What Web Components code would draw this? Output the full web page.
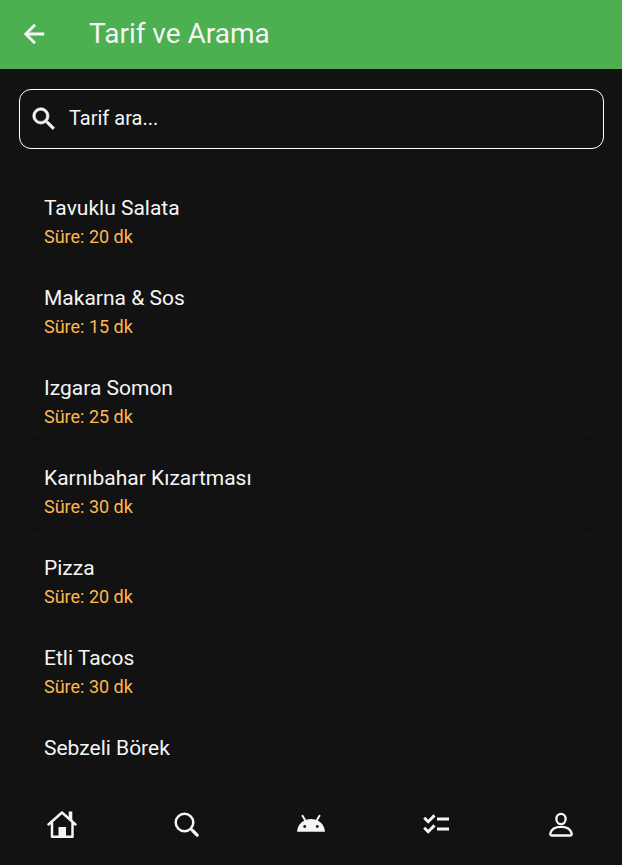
<!DOCTYPE html>
<html lang="tr">
<head>
<meta charset="utf-8">
<meta name="viewport" content="width=device-width, initial-scale=1">
<title>Tarif ve Arama</title>
<style>
  body { margin: 0; background: #121212; color: #f5f5f5; font-family: Roboto, "Liberation Sans", sans-serif; }
</style>
</head>
<body>
<recipe-app>
  <app-header slot="header">Tarif ve Arama</app-header>
  <search-field slot="search" placeholder="Tarif ara..."></search-field>
  <recipe-card minutes="20">Tavuklu Salata</recipe-card>
  <recipe-card minutes="15">Makarna &amp; Sos</recipe-card>
  <recipe-card minutes="25">Izgara Somon</recipe-card>
  <recipe-card minutes="30">Karnıbahar Kızartması</recipe-card>
  <recipe-card minutes="20">Pizza</recipe-card>
  <recipe-card minutes="30">Etli Tacos</recipe-card>
  <recipe-card>Sebzeli Börek</recipe-card>
  <bottom-nav slot="nav"></bottom-nav>
</recipe-app>
<script>
  const define = (name, html, setup) => {
    const template = document.createElement('template');
    template.innerHTML = html;
    customElements.define(name, class extends HTMLElement {
      constructor() {
        super();
        this.attachShadow({ mode: 'open' }).append(template.content.cloneNode(true));
      }
      connectedCallback() { if (setup) setup(this, this.shadowRoot); }
    });
  };

  define('recipe-app', `
    <style>
      :host { display: flex; flex-direction: column; height: 100vh; }
      .search { padding: 20px 18px 10px 19px; }
      .list { flex: 1; min-height: 0; overflow: hidden; padding: 20px 24px 0; }
    </style>
    <slot name="header"></slot>
    <div class="search"><slot name="search"></slot></div>
    <main class="list"><slot></slot></main>
    <slot name="nav"></slot>`);

  define('app-header', `
    <style>
      :host { display: flex; align-items: center; gap: 40px; box-sizing: border-box; height: 69px; padding: 0 19px 2px; background: #4caf50; }
      button { display: flex; padding: 0; border: 0; background: none; color: inherit; }
      h1 { margin: 0; font-size: 28px; line-height: 36px; font-weight: 400; }
    </style>
    <button type="button" aria-label="Geri">
      <svg width="30" height="30" viewBox="0 0 24 24" fill="currentColor" stroke="currentColor" stroke-width=".4" aria-hidden="true"><path d="M20 11H7.83l5.59-5.59L12 4l-8 8 8 8 1.41-1.41L7.83 13H20v-2z"/></svg>
    </button>
    <h1><slot></slot></h1>`);

  define('search-field', `
    <style>
      :host { display: block; }
      label { display: flex; align-items: center; gap: 10px; height: 58px; padding: 0 9px; border: 1px solid #fff; border-radius: 12px; }
      svg { flex: none; }
      input { flex: 1; min-width: 0; padding: 0 0 2px; border: 0; outline: 0; background: none; color: inherit; font: 20px/28px Roboto, "Liberation Sans", sans-serif; }
      input::placeholder { color: #f5f5f5; opacity: 1; }
    </style>
    <label>
      <svg width="30" height="30" viewBox="0 0 24 24" fill="currentColor" stroke="currentColor" stroke-width=".5" aria-hidden="true"><path d="M15.5 14h-.79l-.28-.27A6.47 6.47 0 0 0 16 9.500 6.500 6.500 0 1 0 9.500 16c1.610 0 3.090-.590 4.230-1.570l.270.280v.790l5 4.990L20.490 19l-4.990-5zm-6 0C7.010 14 5 11.990 5 9.500S7.010 5 9.500 5 14 7.010 14 9.500 11.990 14 9.500 14z"/></svg>
      <input type="text">
    </label>`, (el, root) => {
      const input = root.querySelector('input');
      input.placeholder = el.getAttribute('placeholder');
      input.setAttribute('aria-label', 'Tarif ara');
    });

  define('recipe-card', `
    <style>
      :host { display: block; box-sizing: border-box; height: 80px; margin-bottom: 10px; padding: 15px 20px; border-radius: 15px; background: #121212; box-shadow: 0 1px 1px #0f0f0f; }
      h2, p { margin: 0; font-weight: 400; }
      h2 { font-size: 21px; line-height: 28px; }
      p { font-size: 18px; line-height: 30px; color: #ffb74d; }
    </style>
    <h2><slot></slot></h2>
    <p></p>`, (el, root) => {
      const minutes = el.getAttribute('minutes');
      if (minutes) root.querySelector('p').textContent = 'Süre: ' + minutes + ' dk';
    });

  define('bottom-nav', `
    <style>
      :host { display: block; background: #121212; }
      nav { display: grid; grid-template-columns: repeat(5, 1fr); height: 100px; padding-top: 20px; box-sizing: border-box; }
      button { display: flex; align-items: center; justify-content: center; border: 0; padding: 0; background: none; color: inherit; }
    </style>
    <nav aria-label="Ana menü">
      <button type="button" aria-label="Ana sayfa">
        <svg width="30" height="30" viewBox="0 0 30 30" fill="none" stroke="currentColor" stroke-width="2.500" stroke-linecap="round" stroke-linejoin="round"><path d="M1.500 14.500 15 2.500l13.500 12M5 13V26.800h20.500V13"/><path d="M21.700 1.500h3.600V11l-3.600-3z" fill="currentColor" stroke="none"/><path d="M11.500 17h7.500v10h-7.500z" fill="currentColor" stroke="none"/></svg>
      </button>
      <button type="button" aria-label="Ara">
        <svg width="30" height="30" viewBox="0 0 30 30" fill="none" stroke="currentColor" stroke-width="2.500" stroke-linecap="round"><circle cx="12.500" cy="12.500" r="8.800"/><path d="m19 19 1.500 1.500"/><path d="m21 21 4.200 4.200" stroke-width="3.200"/></svg>
      </button>
      <button type="button" aria-label="Asistan">
        <svg width="30" height="30" viewBox="0 0 30 30"><path d="M1 21.800C1.600 14 7.500 9 15 9s13.400 5 14 12.800z" fill="currentColor"/><path d="m6.500 5.800 3.300 5.400M23.500 5.800l-3.300 5.400" stroke="currentColor" stroke-width="2" stroke-linecap="round"/><circle cx="8.700" cy="16.500" r="1.400" fill="#121212"/><circle cx="21.300" cy="16.500" r="1.400" fill="#121212"/></svg>
      </button>
      <button type="button" aria-label="Liste">
        <svg width="30" height="30" viewBox="0 0 30 30" fill="none" stroke="currentColor" stroke-width="3"><path d="m4.200 7.700 4 4 6.300-6.300M4.200 17.700l4 4 6.300-6.300" stroke-width="2.900"/><path d="M17 9h12M17 19h12"/></svg>
      </button>
      <button type="button" aria-label="Profil">
        <svg width="30" height="30" viewBox="0 0 30 30" fill="none" stroke="currentColor" stroke-width="2.300" stroke-linejoin="round"><ellipse cx="16" cy="9" rx="4.600" ry="5.200"/><path d="M7 25.500h18c1.300 0 2-.8 1.700-2-1-4-5.200-6.600-10.700-6.600S6.300 19.500 5.300 23.500c-.3 1.200.4 2 1.700 2z"/></svg>
      </button>
    </nav>`);
</script>
</body>
</html>
